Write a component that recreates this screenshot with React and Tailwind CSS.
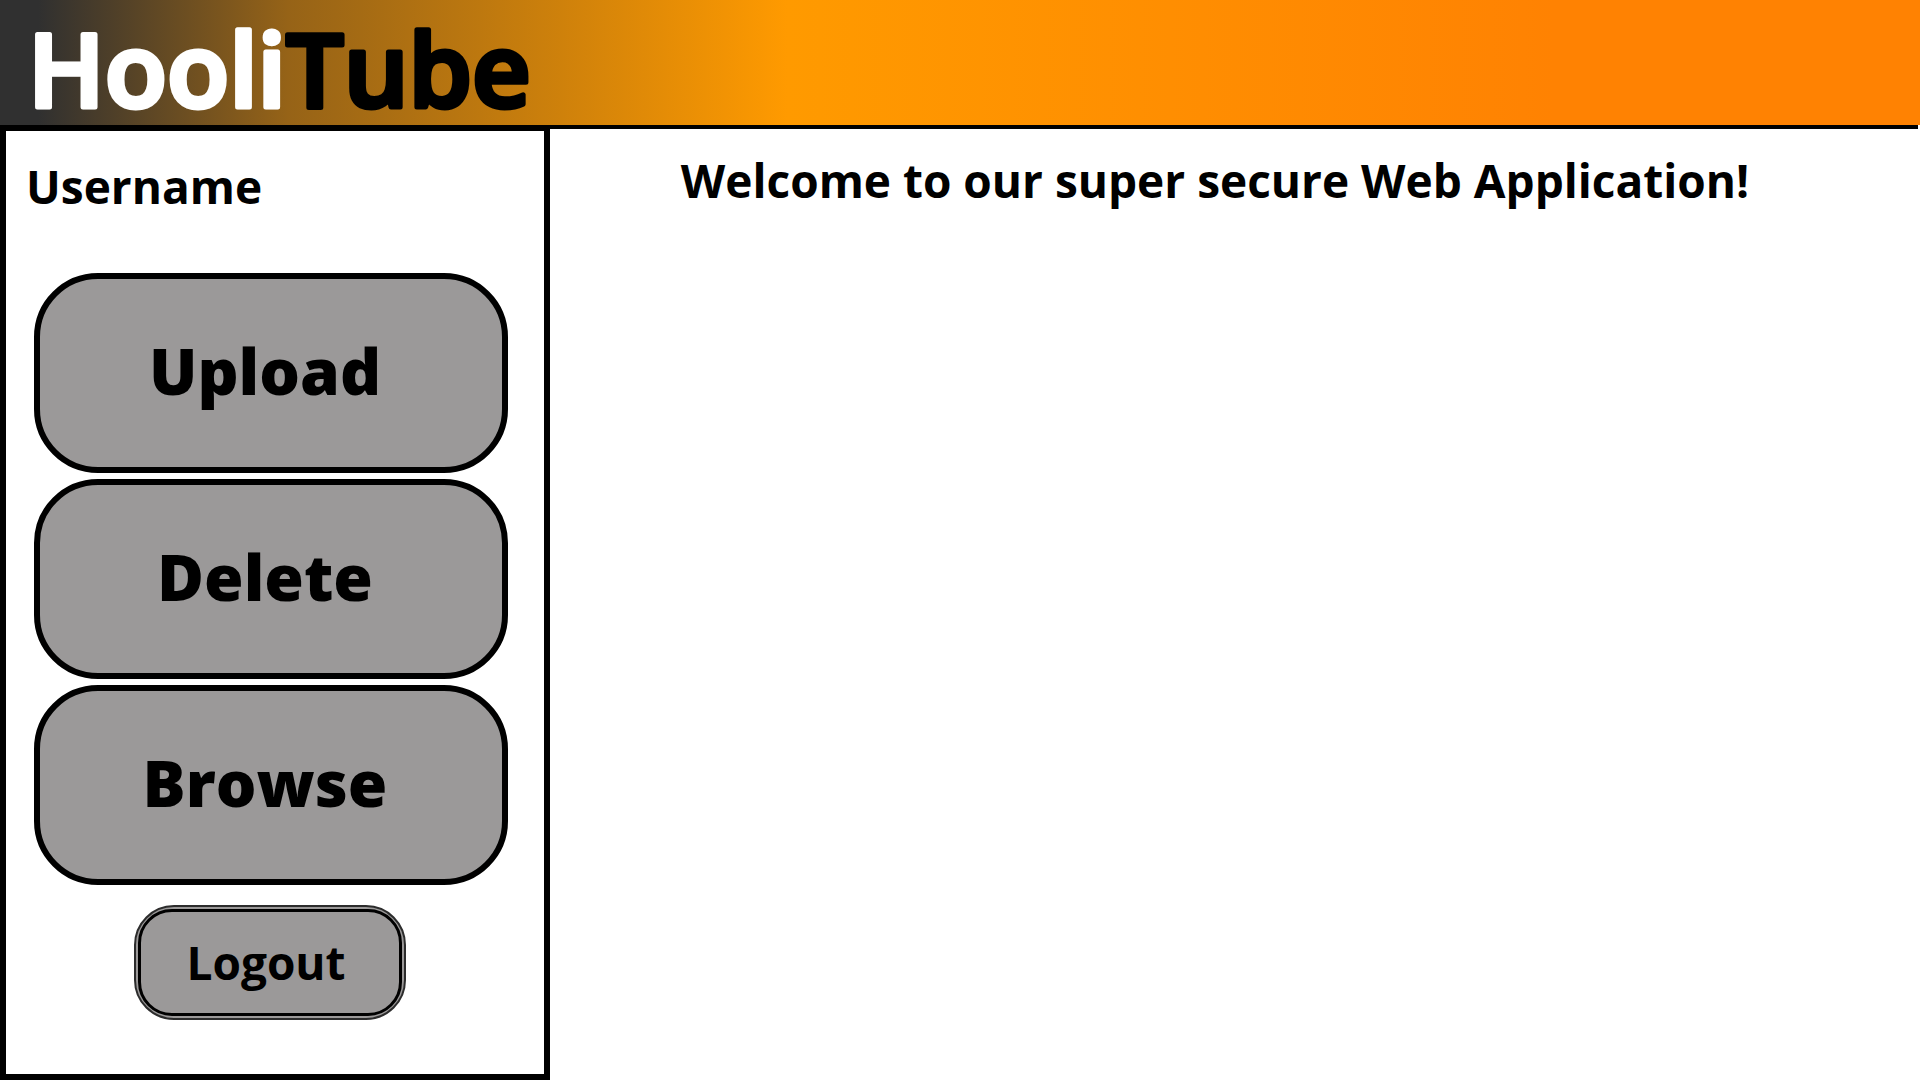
const actions = ["Upload", "Delete", "Browse"];

function Logo() {
  return (
    <svg
      viewBox="0 0 560 125"
      className="block h-[125px] overflow-visible"
      role="img"
      aria-label="HooliTube"
      fontFamily="'Open Sans', sans-serif"
      fontSize="102"
      fontWeight="600"
      strokeWidth="5"
      strokeLinejoin="round"
    >
      <text x="28" y="107">
        <tspan fill="#fff" stroke="#fff">Hooli</tspan>
        <tspan fill="#000" stroke="#000">Tube</tspan>
      </text>
    </svg>
  );
}

function ActionButton({ label }) {
  return (
    <button
      type="button"
      className="flex h-[200px] w-full items-center justify-center rounded-[64px] border-6 border-black bg-[#9b9999] pr-3 pb-1 text-[64px] font-extrabold"
    >
      {label}
    </button>
  );
}

export default function App() {
  return (
    <div className="flex min-h-screen flex-col bg-white font-['Open_Sans',sans-serif] text-black">
      <header className="bg-[linear-gradient(90deg,#303030_2%,#966317_15%,#bd780f_25%,#ff9a00_41%,#ff8202_81%)]">
        <Logo />
      </header>
      <div className="mr-0.5 h-1 bg-black" />
      <div className="flex grow">
        <aside className="flex w-[550px] shrink-0 flex-col border-6 border-t-2 border-black pt-6">
          <h2 className="pl-5 text-[46px] leading-[62px] font-bold">Username</h2>
          <nav className="mt-14 flex flex-col gap-1.5 pr-9 pl-7">
            {actions.map((label) => (
              <ActionButton key={label} label={label} />
            ))}
          </nav>
          <button
            type="button"
            className="mt-5 ml-32 flex h-[115px] w-[272px] items-center justify-center rounded-[40px] border-2 border-[#2c2c2c] bg-[#9b9999] p-0.5 text-[46px] font-bold"
          >
            <span className="flex h-full w-full items-center justify-center rounded-[34px] border-3 border-black pr-2">
              Logout
            </span>
          </button>
        </aside>
        <main className="grow pt-5">
          <h1 className="pr-15 pl-5 text-center text-[46px] leading-[62px] font-bold">
            Welcome to our super secure Web Application!
          </h1>
        </main>
      </div>
    </div>
  );
}
